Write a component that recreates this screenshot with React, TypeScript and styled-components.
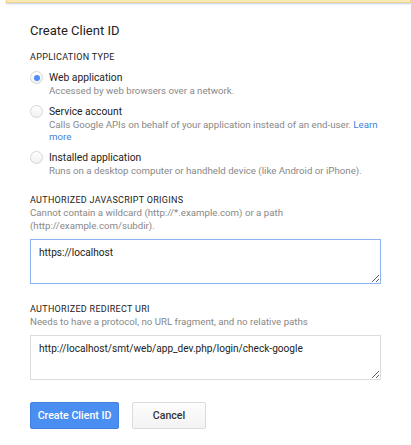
import React from "react";
import styled, { createGlobalStyle } from "styled-components";

const Global = createGlobalStyle`
  html, body { margin: 0; padding: 0; background: #fff; }
  body { font-family: Roboto, "Liberation Sans", Arial, sans-serif; color: #222; }
  * { box-sizing: border-box; }
`;

const Page = styled.div`
  width: 411px;
  height: 445px;
  overflow: hidden;
  background: #fff;
`;

const Notice = styled.div`
  margin-left: 6px;
  height: 3px;
  background: #fbeab8;
  border: 1px solid #f0d48a;
  border-top: none;
  box-shadow: 0 1px 2px rgba(120, 140, 200, 0.45);
`;

const Form = styled.div`
  padding: 18px 30px 0 30px;
  display: flex;
  flex-direction: column;
`;

const Title = styled.h2`
  margin: 0;
  font-size: 13px;
  font-weight: 400;
  line-height: 20px;
  color: #222;
`;

const SectionLabel = styled.div<{ $top: number }>`
  margin-top: ${(p) => p.$top}px;
  font-size: 9px;
  letter-spacing: 0.3px;
  text-transform: uppercase;
  color: #222;
  line-height: 12px;
`;

const Help = styled.div<{ $lh?: number }>`
  font-size: 9.7px;
  color: #888;
  line-height: ${(p) => p.$lh ?? 13}px;
`;

const RadioList = styled.div`
  display: flex;
  flex-direction: column;
  gap: 6px;
  margin-top: 7px;
`;

const RadioRow = styled.label`
  display: grid;
  grid-template-columns: 19px 1fr;
`;

const RadioCircle = styled.span<{ $checked?: boolean }>`
  width: 13px;
  height: 13px;
  margin-top: 1px;
  border-radius: 50%;
  border: 1px solid #d6d6d6;
  background: linear-gradient(#ffffff, #f1f1f1);
  display: flex;
  align-items: center;
  justify-content: center;
  &::after {
    content: "";
    width: 6px;
    height: 6px;
    border-radius: 50%;
    background: ${(p) => (p.$checked ? "#4d8ef7" : "transparent")};
  }
`;

const RadioText = styled.div`
  display: flex;
  flex-direction: column;
`;

const RadioTitle = styled.span`
  font-size: 10.3px;
  line-height: 15px;
  color: #222;
`;

const Link = styled.a`
  color: #3f7fdc;
  text-decoration: none;
`;

const Area = styled.textarea<{ $focus?: boolean }>`
  display: block;
  margin-top: 7px;
  width: 351px;
  height: 45px;
  padding: 6px 8px;
  font-family: Roboto, "Liberation Sans", Arial, sans-serif;
  font-size: 10.1px;
  line-height: 14px;
  color: #222;
  border: 1px solid ${(p) => (p.$focus ? "#8cb4ef" : "#dcdcdc")};
  outline: none;
  resize: vertical;
  background: #fff;
`;

const Buttons = styled.div`
  display: flex;
  gap: 13px;
  margin-top: 22px;
`;

const Button = styled.button<{ $primary?: boolean }>`
  height: 27px;
  padding: 0;
  width: ${(p) => (p.$primary ? 89 : 74)}px;
  font-family: Roboto, "Liberation Sans", Arial, sans-serif;
  font-size: 10.6px;
  font-weight: 500;
  border-radius: 2px;
  color: ${(p) => (p.$primary ? "#fff" : "#333")};
  background: ${(p) => (p.$primary ? "#4b8ef1" : "linear-gradient(#fdfdfd, #f3f3f3)")};
  border: 1px solid ${(p) => (p.$primary ? "#3f7fe0" : "#dcdcdc")};
  cursor: pointer;
`;

export default function App() {
  return (
    <Page>
      <Global />
      <Notice />
      <Form>
        <Title>Create Client ID</Title>
        <SectionLabel $top={10}>Application type</SectionLabel>
        <RadioList>
          <RadioRow>
            <RadioCircle $checked />
            <RadioText>
              <RadioTitle>Web application</RadioTitle>
              <Help $lh={12.5}>Accessed by web browsers over a network.</Help>
            </RadioText>
          </RadioRow>
          <RadioRow>
            <RadioCircle />
            <RadioText>
              <RadioTitle>Service account</RadioTitle>
              <Help $lh={12.5}>
                Calls Google APIs on behalf of your application instead of an end-user.{" "}
                <Link href="#">Learn more</Link>
              </Help>
            </RadioText>
          </RadioRow>
          <RadioRow>
            <RadioCircle />
            <RadioText>
              <RadioTitle>Installed application</RadioTitle>
              <Help $lh={12.5}>Runs on a desktop computer or handheld device (like Android or iPhone).</Help>
            </RadioText>
          </RadioRow>
        </RadioList>
        <SectionLabel $top={17}>Authorized JavaScript origins</SectionLabel>
        <Help>
          Cannot contain a wildcard (http://*.example.com) or a path (http://example.com/subdir).
        </Help>
        <Area $focus defaultValue="https://localhost" />
        <SectionLabel $top={19}>Authorized redirect URI</SectionLabel>
        <Help>Needs to have a protocol, no URL fragment, and no relative paths</Help>
        <Area defaultValue="http://localhost/smt/web/app_dev.php/login/check-google" />
        <Buttons>
          <Button $primary>Create Client ID</Button>
          <Button>Cancel</Button>
        </Buttons>
      </Form>
    </Page>
  );
}
